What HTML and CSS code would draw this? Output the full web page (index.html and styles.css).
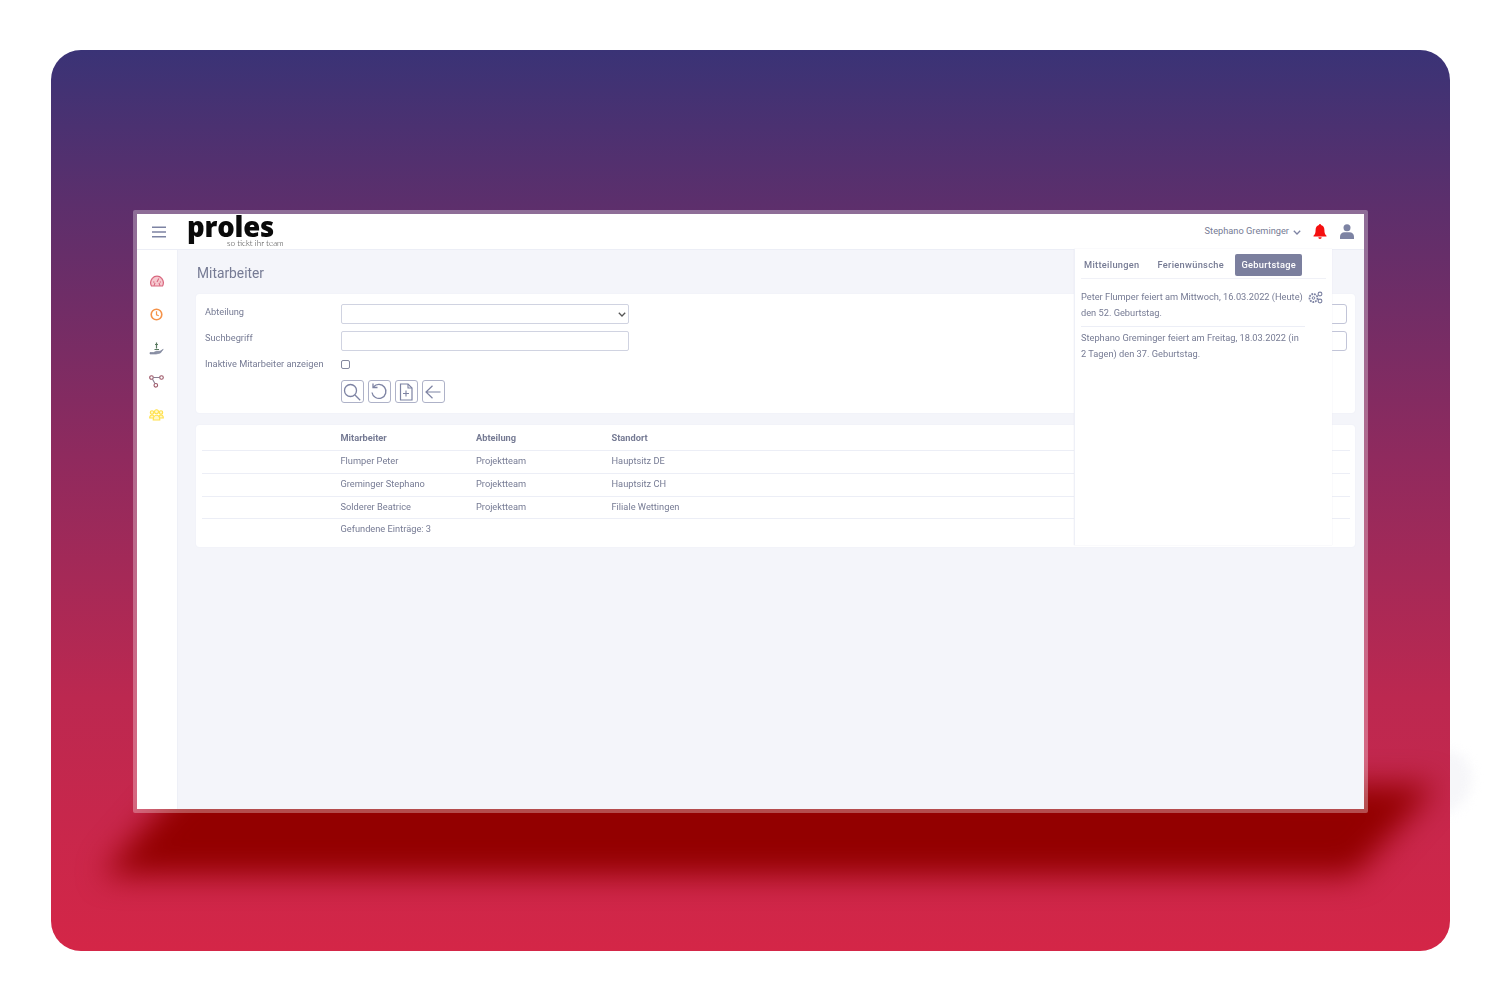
FILE: index.html
```html
<!DOCTYPE html>
<html lang="de">
<head>
<meta charset="utf-8">
<title>proles – Mitarbeiter</title>
<link rel="stylesheet" href="styles.css">
</head>
<body>
<div class="outer-glow"></div>
<div class="stage">
  <div class="shadow-blur"><div class="shadow-shape"></div></div>
  <div class="window">
    <header class="topbar">
      <svg class="burger" viewBox="0 0 14 12" width="14" height="12"><path d="M0 1.2h14M0 6h14M0 10.800h14" stroke="#7d83a3" stroke-width="1.600" fill="none"/></svg>
      <div class="logo"><span class="logo-word">proles</span><span class="logo-sub">so tickt ihr team</span></div>
      <div class="user">
        <span class="user-name">Stephano Greminger</span>
        <svg class="chev" viewBox="0 0 8 5" width="8" height="5"><path d="M.8.8 4 4l3.200-3.200" stroke="#7d83a3" stroke-width="1.300" fill="none"/></svg>
        <svg class="bell" viewBox="0 0 14 15" width="14" height="15"><path d="M7 0a1 1 0 0 1 1 1.100C10.300 1.600 11.400 3.500 11.400 6c0 3 .6 4.300 2.100 5.800V12.500H.5v-.7C2 10.300 2.600 9 2.600 6c0-2.500 1.100-4.400 3.400-4.900A1 1 0 0 1 7 0z" fill="#f50f0f"/><path d="M5.300 13.200h3.400a1.700 1.700 0 0 1-3.400 0z" fill="#f50f0f"/></svg>
        <svg class="person" viewBox="0 0 14 15" width="14" height="15"><circle cx="7" cy="3.800" r="3.500" fill="#7d83a3"/><path d="M0 15v-2.500C0 9.800 2 8.200 4.500 8.200h5c2.500 0 4.500 1.600 4.500 4.300V15z" fill="#7d83a3"/></svg>
      </div>
    </header>
    <div class="body">
      <nav class="sidebar">
        <span class="nav-item"><svg viewBox="0 0 14 12" width="14" height="12"><path d="M1.500 11C.2 8.500.5 5.500 2.300 3.300 4.700.5 9.300.5 11.700 3.300 13.500 5.500 13.800 8.500 12.500 11z" fill="#f6c9d0" stroke="#d9687f" stroke-width="1.200"/><path d="M7 7 8.800 3.500M3 7h1.500M9.800 7H11M4 10.800l1-3M10 10.800l-1-3" stroke="#d9687f" stroke-width="1.100" fill="none"/></svg></span>
        <span class="nav-item"><svg viewBox="0 0 13 13" width="13" height="13"><circle cx="6.500" cy="6.500" r="5.300" fill="#fff" stroke="#f5934a" stroke-width="1.600"/><path d="M6.500 3.200v3.600l2.300 1" stroke="#f5934a" stroke-width="1.200" fill="none"/></svg></span>
        <span class="nav-item"><svg viewBox="0 0 15 14" width="15" height="14"><path d="M1 11.500h3.500l3-1.200h3.500l3.200-2-2.800 3.700L7 13H1z" fill="#8d93a8" stroke="#767c94" stroke-width=".6"/><path d="M7.500 1.500v6M5.500 8.500h4.500M6 3.500h3" stroke="#5a7a60" stroke-width="1.200" fill="none"/></svg></span>
        <span class="nav-item"><svg viewBox="0 0 15 13" width="15" height="13"><circle cx="2.500" cy="2.500" r="1.800" fill="none" stroke="#9c5566" stroke-width="1.100"/><circle cx="12.500" cy="2.500" r="1.800" fill="none" stroke="#9c5566" stroke-width="1.100"/><circle cx="6.800" cy="10.300" r="1.800" fill="none" stroke="#9c5566" stroke-width="1.100"/><path d="M4.300 2.500h6.400M3.400 4.100l2.500 4.500" stroke="#8a7f92" stroke-width="1.100" fill="none"/></svg></span>
        <span class="nav-item"><svg viewBox="0 0 15 12" width="15" height="12"><g fill="#fff8c8" stroke="#ffe04a" stroke-width="1.100"><circle cx="3" cy="3.500" r="1.700"/><circle cx="12" cy="3.500" r="1.700"/><path d="M.7 9c0-2 1-3 2.300-3s2.300 1 2.300 3zM9.700 9c0-2 1-3 2.300-3s2.300 1 2.300 3z"/><circle cx="7.500" cy="2.700" r="2"/><path d="M4.200 11c0-3 1.300-4.800 3.300-4.800s3.300 1.800 3.300 4.800z"/></g></svg></span>
      </nav>
      <main class="main">
        <h1 class="title">Mitarbeiter</h1>
        <section class="card filter">
          <label class="lbl">Abteilung</label>
          <div class="fake-select"><svg viewBox="0 0 8 5" width="8" height="5"><path d="M.8.8 4 4l3.200-3.200" stroke="#555" stroke-width="1.300" fill="none"/></svg></div>
          <div class="ghost-input"></div>
          <label class="lbl">Suchbegriff</label>
          <div class="field"></div>
          <div class="ghost-input"></div>
          <label class="lbl">Inaktive Mitarbeiter anzeigen</label>
          <div class="check-cell"><span class="check"></span></div>
          <span class="spacer"></span>
          <span class="spacer"></span>
          <div class="actions">
            <button class="btn"><svg viewBox="0 0 18 18" width="18" height="18"><circle cx="7.500" cy="7.500" r="6" fill="none" stroke="#7d83a3" stroke-width="1.300"/><path d="m12 12 5.200 5.200" stroke="#7d83a3" stroke-width="1.300"/></svg></button>
            <button class="btn"><svg viewBox="0 0 18 18" width="18" height="18"><path d="M3.500 4A7 7 0 1 1 2 9.500" fill="none" stroke="#7d83a3" stroke-width="1.300"/><path d="M3 .5V4.500H7.500" fill="none" stroke="#7d83a3" stroke-width="1.300"/></svg></button>
            <button class="btn"><svg viewBox="0 0 14 18" width="14" height="18"><path d="M1.500 1h7.500l4 4v12h-11.500z" fill="none" stroke="#7d83a3" stroke-width="1.200"/><path d="M9 1v4h4M7 7.500v6M4 10.500h6" fill="none" stroke="#7d83a3" stroke-width="1.100"/></svg></button>
            <button class="btn"><svg viewBox="0 0 16 14" width="16" height="14"><path d="M15.500 7H1M7.500 .7 1 7l6.500 6.300" fill="none" stroke="#7d83a3" stroke-width="1.200"/></svg></button>
          </div>
        </section>
        <section class="card list">
          <div class="row head"><span></span><span>Mitarbeiter</span><span>Abteilung</span><span>Standort</span></div>
          <div class="row"><span></span><span>Flumper Peter</span><span>Projektteam</span><span>Hauptsitz DE</span></div>
          <div class="row"><span></span><span>Greminger Stephano</span><span>Projektteam</span><span>Hauptsitz CH</span></div>
          <div class="row"><span></span><span>Solderer Beatrice</span><span>Projektteam</span><span>Filiale Wettingen</span></div>
          <div class="row foot"><span></span><span>Gefundene Einträge: 3</span></div>
        </section>
      </main>
    </div>
    <aside class="panel">
      <div class="tabs">
        <span class="tab tab-first">Mitteilungen</span>
        <span class="tab tab-second">Ferienwünsche</span>
        <span class="tab active">Geburtstage</span>
      </div>
      <div class="msgs">
        <svg class="gears" viewBox="0 0 15 13" width="15" height="13"><circle cx="5.500" cy="7" r="4" fill="none" stroke="#7d83a3" stroke-width="1.800" stroke-dasharray="1.800 .9"/><circle cx="5.500" cy="7" r="1.300" fill="none" stroke="#7d83a3"/><circle cx="12" cy="3" r="1.900" fill="none" stroke="#7d83a3" stroke-width="1.100"/><circle cx="12" cy="10" r="1.900" fill="none" stroke="#7d83a3" stroke-width="1.100"/></svg>
        <p class="msg">Peter Flumper feiert am Mittwoch, 16.03.2022 (Heute) den 52. Geburtstag.</p>
        <p class="msg">Stephano Greminger feiert am Freitag, 18.03.2022 (in 2 Tagen) den 37. Geburtstag.</p>
      </div>
    </aside>
  </div>
</div>
</body>
</html>
```
FILE: styles.css
```css
* { box-sizing: border-box; }
html, body { margin: 0; height: 1001px; overflow: hidden; background: #fff; }
body { position: relative; padding: 50px 50px 50px 51px; font-family: Roboto, "Liberation Sans", sans-serif; color: #767b94; font-size: 9.25px; }
.outer-glow { position: absolute; left: 1400px; top: 750px; width: 72px; height: 65px; border-radius: 0 30px 40px 0; background: #f3f3f7; filter: blur(6px); opacity: .75; }
.stage { position: relative; height: 901px; border-radius: 30px; overflow: hidden; background: linear-gradient(180deg, #3a3376 0%, #5c2f6c 17%, #8f2a5e 45%, #bc2850 72%, #d42647 100%); padding: 160px 82px 0 82px; }
.shadow-blur { position: absolute; inset: 0; filter: blur(15px); }
.shadow-shape { position: absolute; inset: 0; background: #930000; clip-path: polygon(134px 730px, 1385px 735px, 1304px 825px, 52px 825px); }
.window { position: relative; height: 603px; border: 4px solid rgba(255,255,255,.3); border-radius: 2px; display: flex; flex-direction: column; background: #f4f5fa; background-clip: padding-box; }
.topbar, .body, .panel { filter: blur(.3px); }
.topbar { height: 36px; flex: none; background: #fff; border-bottom: 1px solid #eceef6; display: flex; align-items: center; padding: 0 10px 0 15px; }
.burger { margin-top: 1px; }
.logo { position: relative; margin-left: 21px; height: 35px; width: 100px; }
.logo-word { position: absolute; left: 0; top: -5px; font: 800 27.500px/36px "Open Sans", sans-serif; color: #0a0a0a; letter-spacing: -.2px; }
.logo-sub { position: absolute; left: 40px; top: 24px; font: 300 8.200px/10px Lato, sans-serif; color: #333; white-space: nowrap; }
.user { margin-left: auto; display: flex; align-items: center; }
.user-name { margin-right: 4px; margin-top: -3px; }
.chev { margin-top: 1px; }
.bell { margin-left: 12px; }
.person { margin-left: 13px; }
.body { flex: 1; display: flex; min-height: 0; }
.sidebar { width: 41px; flex: none; background: #fff; border-right: 1px solid #eef0f7; display: flex; flex-direction: column; padding-top: 14px; }
.nav-item { height: 33.500px; display: flex; align-items: center; justify-content: center; padding-right: 1px; flex: none; }
.main { flex: 1; padding: 14px 9px 0 18px; }
.title { margin: 0 0 12px 1px; font: 400 13.800px/18px Roboto, sans-serif; color: #767b94; }
.card { background: #fff; border-radius: 3px; box-shadow: 0 0 1px #dfe2ee; }
.filter { height: 119px; padding: 10px 8px 0 9px; display: grid; grid-template-columns: 135.500px 288px 1fr 260px; grid-template-rows: 27px 26px 23px 23px; align-items: start; }
.lbl { line-height: 16px; margin-top: -1px; }
.lbl:first-child { margin-top: 0; }
.fake-select { height: 20px; border: 1px solid #d0d3e1; border-radius: 2px; display: flex; align-items: center; justify-content: flex-end; padding-right: 2px; }
.field { height: 20px; border: 1px solid #d0d3e1; border-radius: 2px; }
.ghost-input { grid-column: 4; height: 20px; border: 1.500px solid #c2c5d8; border-radius: 3px; }
.check-cell { display: flex; align-items: center; height: 15px; }
.check { width: 9px; height: 9px; border: 1px solid #85899f; border-radius: 2px; background: #fff; }
.actions { grid-column: 2; display: flex; gap: 4px; }
.btn { width: 23px; height: 23px; padding: 0; background: #fff; border: 1px solid #aeb2c8; border-radius: 3px; display: flex; align-items: center; justify-content: center; }
.list { margin-top: 12px; height: 122px; padding: 1px 5px 0 6px; }
.row { display: grid; grid-template-columns: 138.500px 135.500px 135.500px 1fr; height: 22.750px; line-height: 20px; border-bottom: 1px solid #eceef6; }
.row.head { height: 25px; font-weight: 700; line-height: 24px; }
.row.foot { border-bottom: 0; grid-template-columns: 138.500px 1fr; }
.panel { position: absolute; left: 937px; top: 35px; width: 258px; height: 296px; background: #fff; border-left: 1px solid #eef0f7; padding: 5px 6px 0 6px; box-shadow: 0 0 1px #dfe2ee; }
.tabs { height: 25px; display: flex; align-items: center; border-bottom: 1px solid #f0f1f7; padding: 0 0 3px 0; }
.tab { font-weight: 500; line-height: 22px; height: 22px; letter-spacing: .3px; white-space: nowrap; }
.tab-first { margin-left: 3px; }
.tab-second { margin-left: 18px; }
.tab.active { background: #7b7f9e; color: #fff; border-radius: 2px; padding: 0 6.500px; margin-left: 11px; }
.msgs { position: relative; padding: 10px 0 0 0; }
.gears { position: absolute; right: 3px; top: 12px; }
.msg { margin: 0 0 3px; line-height: 16px; padding-bottom: 5px; width: 224px; border-bottom: 1px solid #eceef6; }
.msg:last-child { border-bottom: 0; }
```
